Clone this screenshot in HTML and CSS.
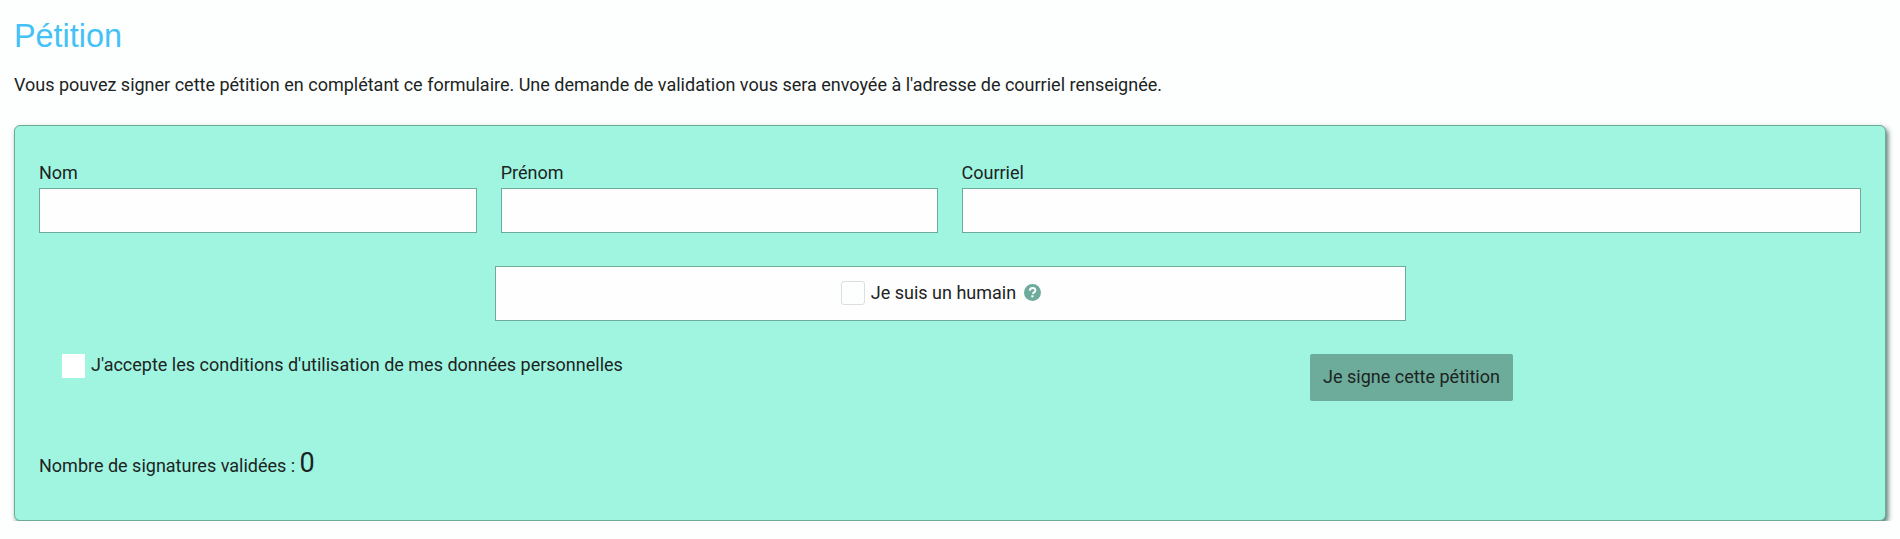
FILE: index.html
```html
<!DOCTYPE html>
<html lang="fr">
<head>
<meta charset="utf-8">
<title>Pétition</title>
<link rel="stylesheet" href="styles.css">
</head>
<body>
<main class="page">
  <h1 class="title">Pétition</h1>
  <p class="intro">Vous pouvez signer cette pétition en complétant ce formulaire. Une demande de validation vous sera envoyée à l'adresse de courriel renseignée.</p>
  <form class="panel">
    <div class="fields">
      <label class="field field-nom">Nom<input class="input" type="text"></label>
      <label class="field field-prenom">Prénom<input class="input" type="text"></label>
      <label class="field field-mail">Courriel<input class="input" type="email"></label>
    </div>
    <div class="captcha-row">
      <div class="captcha">
        <span class="captcha-box"></span>
        <span>Je suis un humain</span>
        <svg class="help" viewBox="0 0 16 16" aria-hidden="true"><circle cx="8" cy="8" r="8" fill="#6dab9a"/><path d="M5.4 6.2C5.5 4.7 6.6 3.7 8.1 3.7c1.5 0 2.6.9 2.6 2.2 0 1-.5 1.5-1.3 2-.6.4-.8.6-.8 1.2v.3" fill="none" stroke="#fff" stroke-width="1.9"/><rect x="6.9" y="10.6" width="2" height="2" fill="#fff"/></svg>
      </div>
    </div>
    <div class="actions">
      <label class="terms"><span class="terms-box"></span><span class="terms-text">J'accepte les conditions d'utilisation de mes données personnelles</span></label>
      <button class="submit" type="button">Je signe cette pétition</button>
    </div>
    <p class="count">Nombre de signatures validées : <span class="count-value">0</span></p>
  </form>
</main>
</body>
</html>
```
FILE: styles.css
```css
* { box-sizing: border-box; }
html, body { margin: 0; padding: 0; }
body {
  background: #fdfefe;
  color: #1c2423;
  font-family: Roboto, "Liberation Sans", sans-serif;
  font-size: 18px;
  line-height: 24px;
}
.page { padding: 17px 14px 0; }
.title {
  margin: 0;
  height: 38px;
  font-family: "Liberation Sans", Arial, sans-serif;
  font-size: 32.4px;
  font-weight: 400;
  line-height: 38px;
  color: #44c2f7;
}
.intro { margin: 18px 0 0; height: 24px; }
.panel {
  margin-top: 28px;
  height: 396px;
  padding: 35px 24px 0;
  background: #a0f5e0;
  border: 1px solid #6dab9a;
  border-radius: 6px;
  box-shadow: 2px 3px 5px rgba(40, 85, 75, 0.8);
}
.fields { display: flex; gap: 24px; }
.field { display: flex; flex-direction: column; gap: 3px; }
.field-nom { width: 438px; }
.field-prenom { width: 437px; }
.field-mail { width: 900px; }
.input {
  display: block;
  width: 100%;
  height: 45px;
  background: #fefefe;
  border: 1px solid #6dab9a;
  border-radius: 0;
}
.captcha-row { display: flex; justify-content: center; margin-top: 33px; }
.captcha {
  display: flex;
  align-items: center;
  justify-content: center;
  gap: 6px;
  width: 911px;
  height: 55px;
  padding: 0 18px 2px 0;
  background: #fefefe;
  border: 1px solid #6dab9a;
}
.captcha-box {
  width: 24px;
  height: 24px;
  background: #fdfefe;
  border: 1px solid #dcdfdf;
  border-radius: 3px;
}
.help { width: 17px; height: 17px; margin: 0 0 1px 2px; }
.actions { display: flex; justify-content: space-between; margin-top: 33px; padding-left: 23px; padding-right: 348px; }
.terms { display: flex; gap: 6px; }
.terms-box { width: 23px; height: 24px; background: #fff; }
.terms-text { line-height: 22px; }
.submit {
  width: 203px;
  height: 47px;
  padding: 0 0 1px;
  background: #6dab9a;
  border: 0;
  border-radius: 2px;
  color: #1c2423;
  font: inherit;
}
.count { margin: 44px 0 0; line-height: 36px; }
.count-value { font-size: 27px; }
```
